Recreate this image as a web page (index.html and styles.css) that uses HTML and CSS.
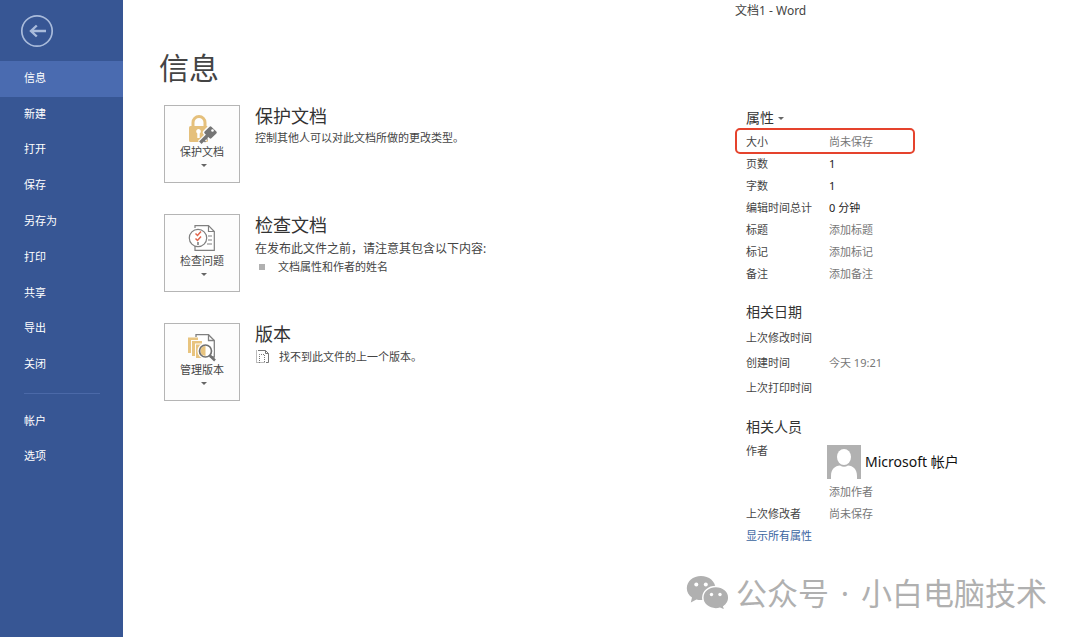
FILE: index.html
```html
<!DOCTYPE html>
<html lang="zh-CN">
<head>
<meta charset="utf-8">
<meta name="viewport" content="width=device-width, initial-scale=1">
<title>文档1 - Word</title>
<link rel="stylesheet" href="styles.css">
</head>
<body>
<div class="app">
  <nav class="sidebar" aria-label="文件">
    <button class="back" type="button" aria-label="返回">
      <svg width="34" height="34" viewBox="0 0 34 34" fill="none" stroke="#a9bbdb">
        <circle cx="17" cy="17" r="15.2" stroke-width="1.7"/>
        <path d="M26 17H11M16.800 11.500L11 17L16.800 22.500" stroke-width="2.400"/>
      </svg>
    </button>
    <ul class="menu menu-main">
      <li><button class="menu-item active" type="button">信息</button></li>
      <li><button class="menu-item" type="button">新建</button></li>
      <li><button class="menu-item" type="button">打开</button></li>
      <li><button class="menu-item" type="button">保存</button></li>
      <li><button class="menu-item" type="button">另存为</button></li>
      <li><button class="menu-item" type="button">打印</button></li>
      <li><button class="menu-item" type="button">共享</button></li>
      <li><button class="menu-item" type="button">导出</button></li>
      <li><button class="menu-item" type="button">关闭</button></li>
    </ul>
    <hr class="divider">
    <ul class="menu">
      <li><button class="menu-item" type="button">帐户</button></li>
      <li><button class="menu-item" type="button">选项</button></li>
    </ul>
  </nav>

  <main class="content">
    <section class="info">
      <h1 class="page-title">信息</h1>

      <article class="entry">
        <button class="tile" type="button">
          <svg width="30" height="30" viewBox="0 0 30 30">
            <path d="M6 13V8.500a6 6 0 0 1 12 0V13" fill="none" stroke="#e5c07c" stroke-width="3"/>
            <rect x="2" y="12" width="19" height="16" rx="1.500" fill="#e5c07c"/>
            <path d="M11.500 15a2.500 2.500 0 0 1 1.200 4.600V24h-2.400v-4.400A2.500 2.500 0 0 1 11.500 15z" fill="#fff"/>
            <path d="M20 22L13 29" stroke="#fdfdfd" stroke-width="6"/>
            <rect x="18" y="13" width="11" height="11" rx="2" transform="rotate(45 23.500 18.500)" fill="#757575" stroke="#fdfdfd" stroke-width="1.500"/>
            <path d="M21 21L13.300 28.700" stroke="#757575" stroke-width="3.400"/>
            <path d="M16 25.500L18.500 28M18.500 23.500L20.500 25.500" stroke="#757575" stroke-width="1.400"/>
            <circle cx="25.500" cy="16.500" r="1.300" fill="#fff"/>
          </svg>
          <span>保护文档</span>
          <i class="caret"></i>
        </button>
        <div class="detail">
          <h2 class="heading">保护文档</h2>
          <p class="text">控制其他人可以对此文档所做的更改类型。</p>
        </div>
      </article>

      <article class="entry">
        <button class="tile" type="button">
          <svg width="30" height="30" viewBox="0 0 30 30" fill="none" stroke="#808080" stroke-width="1.200">
            <path d="M8 5V2.700H21.500L27.300 8.500V27.300H8V22" fill="#fff"/>
            <path d="M21.500 2.700V8.500H27.300M21 13h4M21 17h4M20 21h5"/>
            <circle cx="11" cy="15" r="8.700" fill="#fff"/>
            <path d="M8.500 10.500l2 2 3.500-4M8.500 15.500l2 2 3.500-4" stroke="#e0664d" stroke-width="1.500"/>
            <path d="M11 19v3" stroke="#999" stroke-width="2"/>
          </svg>
          <span>检查问题</span>
          <i class="caret"></i>
        </button>
        <div class="detail">
          <h2 class="heading">检查文档</h2>
          <p class="text lead">在发布此文件之前，请注意其包含以下内容:</p>
          <ul class="findings"><li>文档属性和作者的姓名</li></ul>
        </div>
      </article>

      <article class="entry">
        <button class="tile" type="button">
          <svg width="30" height="30" viewBox="0 0 30 30" fill="none">
            <path d="M9 5V2.700H21.500L27.300 8.500V25H15" fill="#fff" stroke="#808080" stroke-width="1.300"/>
            <path d="M21.500 2.700V8.500H27.300" stroke="#808080" stroke-width="1.300"/>
            <path d="M1 5.500H11V8H4V21H1Z" fill="#e8c47f"/>
            <path d="M5 9H15V11.500H8V24H5Z" fill="#e8c47f"/>
            <path d="M9 12.500H19V26H9Z" fill="#e8c47f"/>
            <circle cx="18.500" cy="19" r="6.600" fill="#fff" stroke="#fff" stroke-width="3"/>
            <path d="M18.500 14v10a5 5 0 0 1 0-10z" fill="#e8c47f"/>
            <circle cx="18.500" cy="19" r="6" stroke="#707070" stroke-width="1.700"/>
            <path d="M22.800 23.500L28 28.500" stroke="#707070" stroke-width="2.500"/>
          </svg>
          <span>管理版本</span>
          <i class="caret"></i>
        </button>
        <div class="detail">
          <h2 class="heading">版本</h2>
          <p class="text with-icon">
            <svg width="15" height="14" viewBox="0 0 15 14" fill="none" stroke="#777">
              <path d="M3 .5H10.500L13.500 3.500V12.500H11M10.500 .5V3.500H13.500"/>
              <path d="M1.500 .5V12.500M1.500 12.500H4M4.500 13V4.500H9.500V13M4.500 12.500H9.500" stroke-dasharray="1 1"/>
            </svg>
            找不到此文件的上一个版本。
          </p>
        </div>
      </article>
    </section>

    <aside class="side">
      <p class="window-title">文档1 - Word</p>

      <section class="props">
        <button class="group-title" type="button">属性<i class="caret"></i></button>
        <dl class="rows">
          <div class="row marked"><dt>大小</dt><dd>尚未保存</dd></div>
          <div class="row"><dt>页数</dt><dd class="strong">1</dd></div>
          <div class="row"><dt>字数</dt><dd class="strong">1</dd></div>
          <div class="row"><dt>编辑时间总计</dt><dd class="strong">0 分钟</dd></div>
          <div class="row"><dt><label for="p-title">标题</label></dt><dd><input id="p-title" class="field" type="text" placeholder="添加标题"></dd></div>
          <div class="row"><dt><label for="p-tags">标记</label></dt><dd><input id="p-tags" class="field" type="text" placeholder="添加标记"></dd></div>
          <div class="row"><dt><label for="p-notes">备注</label></dt><dd><input id="p-notes" class="field" type="text" placeholder="添加备注"></dd></div>
        </dl>
      </section>

      <section class="dates">
        <h2 class="group-title">相关日期</h2>
        <dl class="rows roomy">
          <div class="row"><dt>上次修改时间</dt><dd></dd></div>
          <div class="row"><dt>创建时间</dt><dd>今天 19:21</dd></div>
          <div class="row"><dt>上次打印时间</dt><dd></dd></div>
        </dl>
      </section>

      <section class="people">
        <h2 class="group-title">相关人员</h2>
        <dl class="rows">
          <div class="row">
            <dt><label for="p-author">作者</label></dt>
            <dd>
              <div class="person">
                <svg width="34" height="34" viewBox="0 0 34 34">
                  <path d="M0 0H34V34H0Z" fill="#b1b1b1"/>
                  <ellipse cx="17" cy="12" rx="7" ry="8" fill="#fff"/>
                  <path d="M4 34V31C4 24 8 21 13 20.500Q17 23 21 20.500C26 21 30 24 30 31V34Z" fill="#fff"/>
                </svg>
                <span>Microsoft 帐户</span>
              </div>
              <input id="p-author" class="field" type="text" placeholder="添加作者">
            </dd>
          </div>
          <div class="row"><dt>上次修改者</dt><dd>尚未保存</dd></div>
        </dl>
        <a class="link" href="#">显示所有属性</a>
      </section>
    </aside>
  </main>

  <div class="watermark">
    <svg width="43" height="36" viewBox="0 0 43 36">
      <path d="M15 1C7 1 .8 6.400 .8 13.200c0 3.800 2 7.100 5.200 9.400L4.800 27.500l5.600-3c1.500.4 3 .6 4.600.6 8 0 14.500-5.300 14.500-11.900S23 1 15 1z" fill="#b0b0b0"/>
      <circle cx="10.300" cy="9.500" r="2" fill="#fff"/><circle cx="19.800" cy="9.500" r="2" fill="#fff"/>
      <path d="M29.800 11.500c-7.200 0-13 4.900-13 11.200s5.800 11.200 13 11.200c1.500 0 2.900-.2 4.200-.6l5 2.200-1.200-4c3-2 5-5.200 5-8.800 0-6.300-5.800-11.200-13-11.200z" fill="#b0b0b0" stroke="#fff" stroke-width="1.500"/>
      <circle cx="25.500" cy="19.500" r="1.700" fill="#fff"/><circle cx="34" cy="19.500" r="1.700" fill="#fff"/>
    </svg>
    <span class="kind">公众号</span><span class="dot">·</span><span>小白电脑技术</span>
  </div>
</div>
</body>
</html>
```

FILE: styles.css
```css
*,
*::before {
  box-sizing: border-box;
}

body,
h1,
h2,
p,
ul,
dl,
dd {
  margin: 0;
  padding: 0;
}

body {
  font-family: "Noto Sans", "Noto Sans CJK SC", sans-serif;
  font-size: 11px;
  line-height: 16px;
  color: #444;
  background: #fff;
}

ul {
  list-style: none;
}

button,
input {
  font: inherit;
  color: inherit;
  border: 0;
  padding: 0;
  background: none;
}

svg {
  display: block;
  flex: none;
}

.app {
  position: relative;
  display: flex;
  min-height: 100vh;
}

/* Sidebar */
.sidebar {
  flex: none;
  width: 123px;
  background: #375694;
  color: #fff;
}

.back {
  display: block;
  margin: 14px 0 13px 20px;
}

.menu-main {
  display: flex;
  flex-direction: column;
  min-height: 322px;
}

.menu-main li {
  display: flex;
  flex: 1;
}

.menu-item {
  display: block;
  width: 100%;
  min-height: 35px;
  padding: 0 0 2px 24px;
  text-align: left;
}

.menu-item.active {
  background: #4a6bb0;
}

.divider {
  height: 1px;
  margin: 10px 23px 10px 24px;
  border: 0;
  background: #4b69a8;
}

/* Main area */
.content {
  flex: 1;
  display: grid;
  grid-template-columns: 1fr 345px;
  padding-left: 36px;
}

.page-title {
  padding: 46px 0 15px;
  font-size: 30px;
  line-height: 44px;
  font-weight: 400;
}

.entry {
  display: flex;
  gap: 15px;
  margin: 0 0 31px 5px;
}

.tile {
  flex: none;
  display: flex;
  flex-direction: column;
  align-items: center;
  width: 76px;
  height: 78px;
  padding-top: 8px;
  border: 1px solid #b5b5b5;
  background: #fdfdfd;
}

.caret {
  border: 3px solid transparent;
  border-top-color: #666;
  border-bottom: 0;
}

.tile .caret {
  margin: 4px 0 0 3px;
}

.heading {
  font-size: 18px;
  line-height: 22px;
  font-weight: 400;
  color: #333;
}

.text {
  padding-top: 3px;
}

.lead {
  padding-top: 5px;
  font-size: 12px;
}

.findings {
  padding-top: 2px;
}

.findings li {
  display: flex;
  align-items: center;
  gap: 13px;
  padding-left: 4px;
}

.findings li::before {
  content: "";
  width: 6px;
  height: 6px;
  background: #b0b0b0;
}

.with-icon {
  display: flex;
  align-items: center;
  gap: 9px;
  padding-top: 4px;
}

/* Properties column */
.side {
  padding-left: 11px;
}

.window-title {
  margin: 3px 0 89px -11px;
  font-size: 12px;
}

.group-title {
  display: flex;
  align-items: center;
  gap: 4px;
  font-size: 14px;
  line-height: 20px;
  font-weight: 400;
  color: #333;
}

.group-title .caret {
  border-width: 3px 3px 0;
}

.rows {
  padding-top: 3px;
}

.row {
  position: relative;
  display: flex;
  line-height: 22px;
}

.roomy .row {
  line-height: 25px;
}

.row dt {
  flex: none;
  width: 83px;
}

.row dd {
  color: #777;
}

.row .strong {
  color: #222;
}

.marked::before {
  content: "";
  position: absolute;
  left: -11px;
  top: -3px;
  width: 180px;
  height: 26px;
  border: 2px solid #e5432d;
  border-radius: 5px;
}

.field {
  display: block;
  width: 120px;
  height: 22px;
}

.field::placeholder {
  color: #777;
  opacity: 1;
}

.dates,
.people {
  padding-top: 17px;
}

.person {
  display: flex;
  align-items: center;
  gap: 4px;
  margin: 5px 0 2px -2px;
  font-size: 14px;
  color: #111;
}

.link {
  display: inline-block;
  padding-top: 3px;
  color: #3a649f;
  text-decoration: none;
}

.watermark {
  position: absolute;
  right: 33px;
  bottom: 22px;
  display: flex;
  align-items: center;
  font-size: 31px;
  line-height: 44px;
  color: #b0b0b0;
}

.kind {
  padding-left: 7px;
}

.dot {
  width: 32px;
  text-align: center;
}
```
